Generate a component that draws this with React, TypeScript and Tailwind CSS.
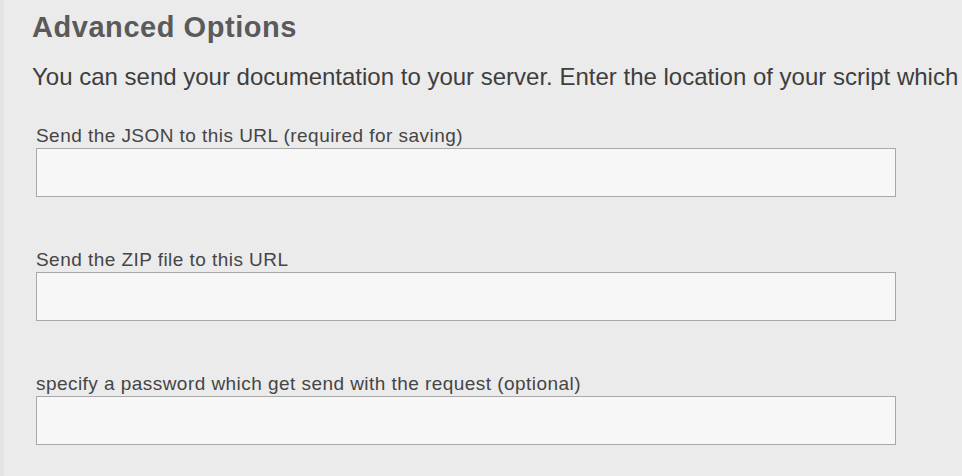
export default function App() {
  const fields = [
    "Send the JSON to this URL (required for saving)",
    "Send the ZIP file to this URL",
    "specify a password which get send with the request (optional)",
  ];
  return (
    <div
      className="w-[962px] h-[476px] overflow-hidden bg-[#ebebeb] flex"
      style={{ fontFamily: '"Liberation Sans", Arial, sans-serif' }}
    >
      <div className="w-[4px] h-full bg-[#e4e4e4] shrink-0" />
      <div className="flex-1 pt-[11px] pl-[28px]">
        <h1 className="text-[29px] leading-[32px] font-bold tracking-[0.55px] text-[#5a5a5a] whitespace-nowrap">
          Advanced Options
        </h1>
        <p className="mt-[18px] text-[24px] leading-[32px] text-[#3e3e3e] whitespace-nowrap">
          You can send your documentation to your server. Enter the location of your script which
        </p>
        <div className="mt-[31px] flex flex-col gap-[51px] pl-[4px]">
          {fields.map((f) => (
            <div key={f} className="flex flex-col">
              <label className="text-[19px] leading-[24px] tracking-[0.45px] text-[#454545] whitespace-nowrap">
                {f}
              </label>
              <input
                type="text"
                className="w-[860px] h-[49px] bg-[#f8f7f7] border border-[#a8a8a8] outline-none"
              />
            </div>
          ))}
        </div>
      </div>
    </div>
  );
}
